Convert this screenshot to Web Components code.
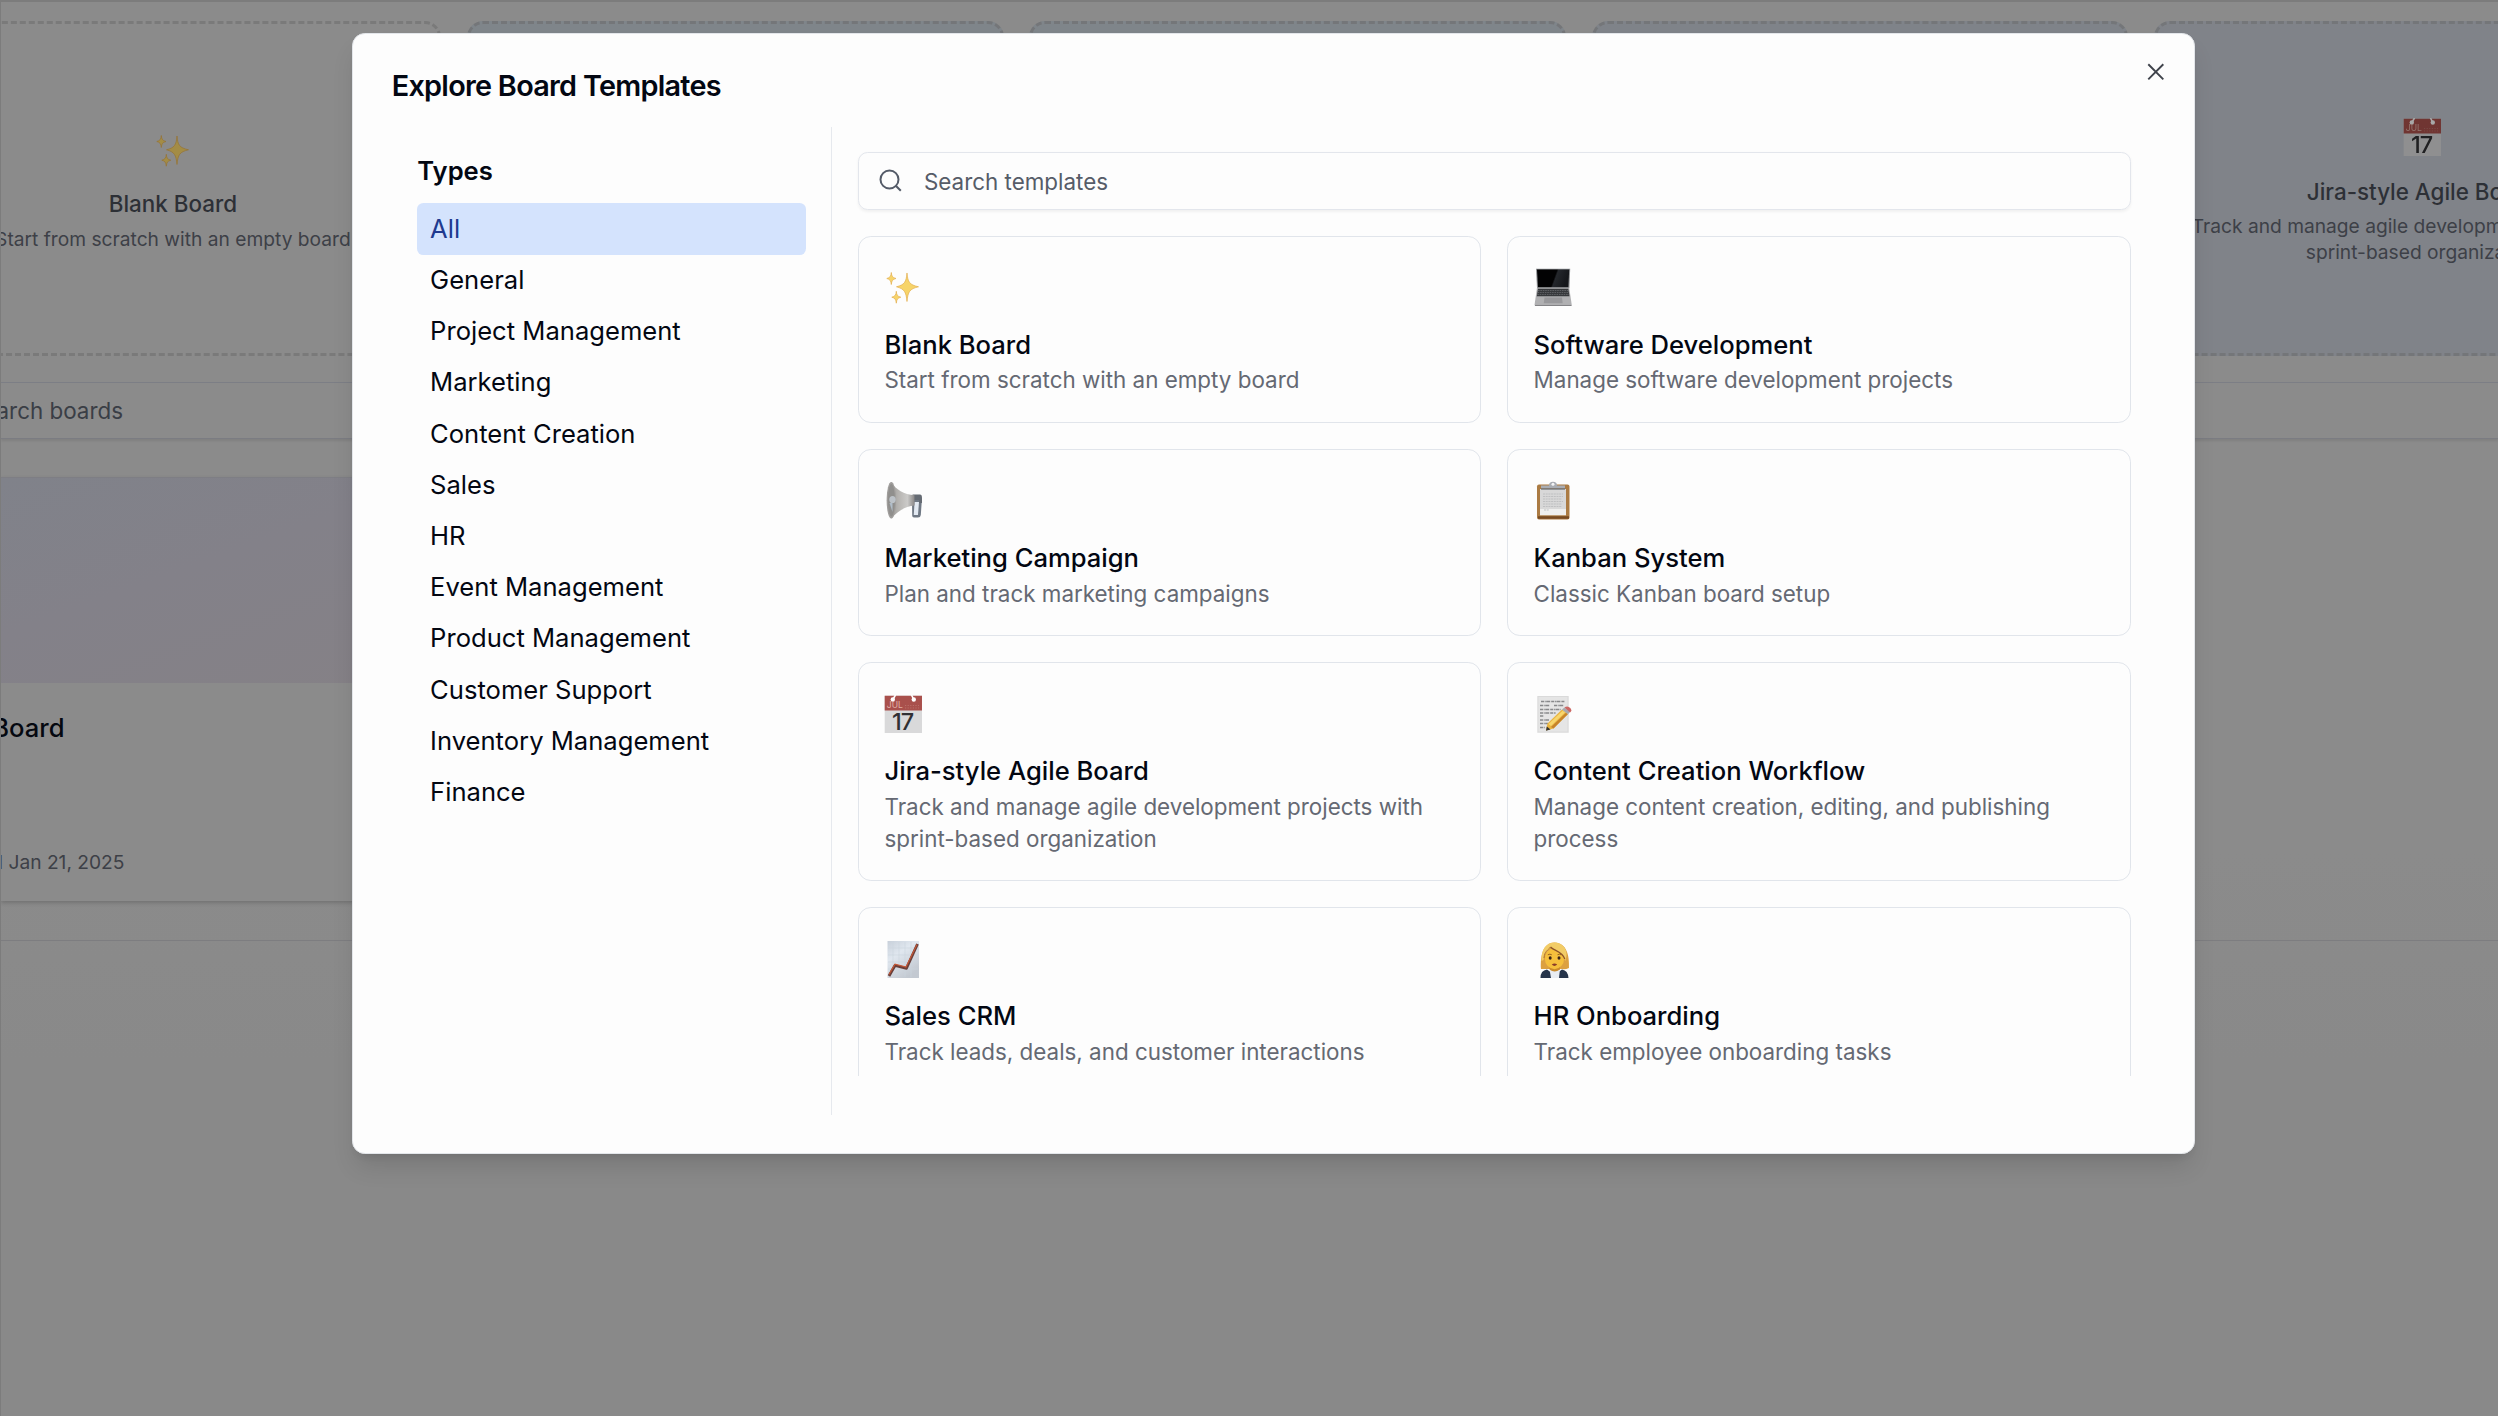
<!DOCTYPE html>
<html lang="en">
<head>
<meta charset="utf-8">
<title>Explore Board Templates</title>
<style>
html,body{margin:0;height:1416px;width:2498px;overflow:hidden;background:#8b8b8b}
body{font-family:Inter,"Liberation Sans",sans-serif;color:#030712;position:relative}
</style>
</head>
<body>
<boards-page></boards-page>
<template-dialog></template-dialog>
<script>
const define=(name,html,setup)=>customElements.define(name,class extends HTMLElement{
  constructor(){super();const t=document.createElement('template');t.innerHTML=html;this.attachShadow({mode:'open'}).append(t.content.cloneNode(true));}
  connectedCallback(){if(setup)setup(this,this.shadowRoot);}
});

const ICONS={
sparkles:`<g fill="#f7d469" stroke="#e3ae4c" stroke-width=".7" stroke-linejoin="round"><path d="M23 5C23.800 14.200 25.400 16.700 34.500 18.800C25.600 21 24 23.500 23 33.500C22 23.500 20.300 21 12.500 18.800C20.500 16.700 22.200 14.200 23 5Z"/><path d="M7.300 4.500C7.600 8.300 8.600 9.600 12 10.500C8.700 11.400 7.700 12.600 7.300 16.500C6.900 12.600 6 11.400 2.800 10.500C6 9.600 7 8.300 7.300 4.500Z"/><path d="M12.300 23.300C12.600 27.100 13.500 28.300 16.800 29.200C13.600 30.100 12.700 31.300 12.300 35.200C11.900 31.300 11 30.100 7.800 29.200C11 28.300 12 27.100 12.300 23.300Z"/></g>`,
laptop:`<defs><linearGradient id="a" x2="1" y2=".2"><stop offset=".6" stop-color="#020203"/><stop offset=".65" stop-color="#24272c"/><stop offset="1" stop-color="#15171b"/></linearGradient></defs><path d="M2 .8H36.200L35.400 20H3Z" fill="#8d8f92"/><path d="M3 1.600H35.200L34.400 19.300H4Z" fill="url(#a)"/><path d="M3 19.800H35.200L37.700 36.500Q37.800 38 36 38H2Q.4 38 .6 36.500Z" fill="#b0b0b2"/><path d="M4 20.800H34.300L35.500 28.300H2.800Z" fill="#37393c"/><path d="M4 22.500H34.500M3.700 24.500H34.800M3.300 26.500H35.200" stroke="#77797d" stroke-width=".6" stroke-dasharray="1.600 .8"/><path d="M10.500 29.500H28L28.700 35.300H9.700Z" fill="#98989b"/><path d="M1 37.500H37.500" stroke="#838386"/>`,
megaphone:`<defs><linearGradient id="a" x1="0" x2="1"><stop stop-color="#9a9997"/><stop offset=".3" stop-color="#b5b3b0"/><stop offset=".7" stop-color="#cbcac8"/><stop offset="1" stop-color="#8a8888"/></linearGradient></defs><path d="M28 18H36.600Q38 18 37.800 20L36.800 34Q36.600 36.500 34 36.500H30Q28 36.500 28.200 34Z" fill="#6f7884"/><path d="M30.500 21H35L34 34H29.800Z" fill="#e2e9f2"/><path d="M28.500 13.500H36Q38 13.500 38 17V22H35V19H28.500Z" fill="#656b73"/><path d="M7 1C12 8.500 20 13.600 30.500 14.200V24.500C21 25.500 13 30.500 7.500 37.500Z" fill="url(#a)"/><ellipse cx="7.300" cy="19.300" rx="4.700" ry="18.300" fill="#a09e9c"/><ellipse cx="7.400" cy="19.300" rx="3.500" ry="16.200" fill="#908f8d"/><ellipse cx="8.500" cy="18.500" rx="3.200" ry="3.600" fill="#bcc2c8"/><path d="M5.500 22L8.500 22V31Z" fill="#b0bdc9"/>`,
clipboard:`<rect x="3" y="3.500" width="32.500" height="35" rx="2" fill="#ab7b43"/><path d="M4 36.500H35" stroke="#764a22" stroke-width="2.500"/><path d="M6 8H32V33.500H6Z" fill="#d8d8d8"/><path d="M6 28H32V34.300H6Z" fill="#efefee"/><path d="M9 13H29M9 15.500H29M9 18H28M9 20.500H29M9 23H28M9 25.500H28M10 29H15" stroke="#bfc0c1" stroke-width="1" stroke-dasharray="2 .7"/><path d="M7 4.500H15Q15 .8 19 .8T23 4.500H31V7.500H7Z" fill="#a9adb4"/><circle cx="19" cy="3.300" r="1.500" fill="#f4f5f7"/><path d="M7 8H31" stroke="#666b71" stroke-width="1.200"/>`,
calendar:`<path d="M.7 .8H38V38H.7Z" fill="#d9d9da"/><path d="M.7 .8H38V15.500H.7Z" fill="#a9504c"/><circle cx="8.800" cy="4.500" r="2.200" fill="#fff"/><path d="M9.200 4L11.500 0" stroke="#fff" stroke-width="1.600"/><circle cx="29.800" cy="4.500" r="2.200" fill="#fff"/><path d="M29.500 4L27.500 0" stroke="#fff" stroke-width="1.600"/><path d="M21 10.500H35M21 13H35" stroke="#b96f68" stroke-width="1" stroke-dasharray="1.200 1.400"/><text x="2.800" y="13" font-size="8.500" fill="#e0b0a6" font-family="Inter,sans-serif">JUL</text><text x="18.500" y="35" text-anchor="middle" font-size="23.500" letter-spacing="-1" fill="#303033" font-family="Inter,sans-serif" font-weight="500">17</text>`,
memo:`<path d="M3.300 1H34.700V37.800H3.300Z" fill="#dadada"/><path d="M4.500 2H33.500V36.500H4.500Z" fill="#e5e5e5"/><path d="M7 6.500H31M6 10.500H16M20 10.500H30M6 14.500H27M6 18H22M6 21H10M6 25H15M6 28.500H14M6 32.500H11" stroke="#88898b" stroke-width="1.300" stroke-dasharray="3 .7 1 .5 4 1"/><path d="M12 35.500L13.500 28.500L28 14.500L34 19L19.500 33.500Z" fill="#e8b442"/><path d="M14.500 29L28.700 15.800L31 17.600L17 31Z" fill="#f8d66c"/><path d="M17 32L32 17.800L33.800 19.300L19.500 33.500Z" fill="#c7842a"/><path d="M12 35.700L12.800 31.500L16.500 34.500Z" fill="#343331"/><path d="M28 14.500L30.500 12.500L36 17L34 19.300Z" fill="#a8a9ad"/><path d="M30.500 12.500Q33.500 10.200 36.300 13Q38.500 15.500 36 17.500Z" fill="#cc6764"/>`,
chart:`<defs><linearGradient id="a" x2=".6" y2="1"><stop stop-color="#c8d0da"/><stop offset=".4" stop-color="#e0e7ef"/><stop offset="1" stop-color="#c3c9d1"/></linearGradient></defs><path d="M3.500 1H35V38H3.500Z" fill="url(#a)"/><path d="M9 2V37M15 2V37M21 2V37M27 2V37M4 8H34M4 15H34M4 22H34M4 29H34" stroke="#cbd5df" stroke-width=".6"/><path d="M5 36L11 25.500L22.500 28.300L33.500 4" fill="none" stroke="#693f3a" stroke-width="2.800" stroke-linejoin="round"/><path d="M5 34.500L11 24.200L22 27L33 4.500" fill="none" stroke="#c75836" stroke-width="1.100"/>`,
woman:`<path d="M7 29C6.500 17 8 3 20.500 2.500C33 3 35.500 16 35 28Q31 30 28 29H12Z" fill="#dca040"/><path d="M6.500 38Q6.500 30.500 13 29.500L20.500 35L28 29.500Q34 30.500 34.500 38Z" fill="#26344a"/><path d="M15.500 29H26L25 38H17Z" fill="#e9edf3"/><path d="M15.500 25H26V29.500Q20.500 33.500 15.500 29.500Z" fill="#c98a2c"/><ellipse cx="20.500" cy="18.700" rx="9.600" ry="10.500" fill="#f5bf3c"/><path d="M9.500 20C10 12 14.500 11 16.500 7.500C19 11.500 28.500 11 31.200 21C36 10 28 2.500 20.500 2.500C12 2.500 7 10 7.500 21Z" fill="#f2cc66"/><path d="M16.500 7C20 11 28 11 30.800 19" fill="none" stroke="#8d5226" stroke-width="1.300"/><path d="M16.500 7C14 10.500 10.500 11 10 18" fill="none" stroke="#a96b2a" stroke-width=".9"/><ellipse cx="16.200" cy="18" rx="1.500" ry="1.800" fill="#3b2418"/><ellipse cx="25" cy="18" rx="1.500" ry="1.800" fill="#3b2418"/><path d="M17.800 24.500Q20.500 22.500 23.200 24.500Q20.500 27.300 17.800 24.500" fill="#8b3c27"/><path d="M13.800 14.800Q16 13.600 17.800 14.800M23.500 14.800Q25.500 13.600 27 14.800" stroke="#8d591d" stroke-width=".9" fill="none"/>`
};
define('emoji-icon',`<style>:host{display:block;width:38.4px;height:38.4px}svg{display:block;width:100%;height:100%}</style><svg viewBox="0 0 38.400 38.400"></svg>`,
 (h,r)=>{r.querySelector('svg').innerHTML=ICONS[h.getAttribute('name')]||'';});

define('board-tile',`<style>
:host{display:flex;flex-direction:column;align-items:center;justify-content:center;box-sizing:border-box;height:334.4px;border:3.2px dashed #7a7a7a;border-radius:16px;background:var(--tile,#8b8b8b);min-width:0;text-align:center}
:host([tinted]){border-color:#747679}
emoji-icon{margin:6.4px 0 19.2px;filter:brightness(.66)}
.t{font-size:22.4px;line-height:32px;font-weight:500;color:#2d3036;white-space:nowrap}
.d{font-size:19.2px;line-height:25.6px;color:#3d4047;margin-top:6.4px;padding:0 25px}
</style><emoji-icon></emoji-icon><div class="t"><slot name="title"></slot></div><div class="d"><slot></slot></div>`,
 (h,r)=>{const n=h.getAttribute('icon'),e=r.querySelector('emoji-icon');if(!n){e.remove();return;}const f=document.createElement('emoji-icon');f.setAttribute('name',n);e.replaceWith(f);});

define('board-card',`<style>
:host{display:flex;flex-direction:column;box-sizing:border-box;width:410px;height:424px;border-top:1px solid #7e7e84;box-shadow:0 1.600px 4px rgba(0,0,0,.18);background:#8b8b8b;overflow:hidden}
.cover{height:205px;flex:none;background:linear-gradient(160deg,#80828a 0%,#838189 45%,#858186 100%)}
.body{display:flex;flex-direction:column;justify-content:space-between;box-sizing:border-box;width:124px;height:192px;padding-top:26px}
.t,.m{display:flex;justify-content:flex-end;white-space:nowrap}
.t{width:63.500px;font-size:25.600px;line-height:38.400px;font-weight:500;color:#050810}
.m{width:123.500px;font-size:19.200px;line-height:25.600px;color:#3d4047}
</style><div class="cover"></div><div class="body"><div class="t"><slot name="title"></slot></div><div class="m"><slot></slot></div></div>`);

define('boards-page',`<style>
:host{display:flex;flex-direction:column;box-sizing:border-box;width:2498px;height:1416px;overflow:hidden;background:linear-gradient(#8b8b8b 60%,#898989 75%);border-top:2px solid #7c7c7c;border-left:1px solid #7c7c7c}
.tiles{display:grid;grid-template-columns:repeat(5,536.800px);gap:25.600px;margin:19.300px 0 0 -96.500px}
.search{display:flex;align-items:center;box-sizing:border-box;height:57.600px;margin-top:26px;border-top:1.600px solid #7c7e85;border-bottom:1.600px solid #7b7c82;box-shadow:0 1.600px 2px rgba(0,0,0,.08);font-size:22.400px;color:#3a3e46}
.search span{width:122px;display:flex;justify-content:flex-end;white-space:nowrap}
.list{padding-top:38px;border-bottom:1.600px solid #7d7d80;box-sizing:border-box;height:502px}
</style>
<div class="tiles">
<board-tile icon="sparkles"><span slot="title">Blank Board</span>Start from scratch with an empty board</board-tile>
<board-tile tinted style="--tile:#7f858a"></board-tile>
<board-tile tinted style="--tile:#7f858a"></board-tile>
<board-tile tinted style="--tile:#7f8389"></board-tile>
<board-tile tinted icon="calendar" style="--tile:#808389"><span slot="title">Jira-style Agile Board</span>Track and manage agile development projects with sprint-based organization</board-tile>
</div>
<div class="search"><span>arch boards</span></div>
<div class="list"><board-card><span slot="title">Board</span>d Jan 21, 2025</board-card></div>`);

define('type-item',`<style>
:host{display:block;box-sizing:border-box;height:51.200px;padding:6.400px 12.800px;border-radius:6.400px;font-size:25.600px;line-height:38.400px;white-space:nowrap}
:host([selected]){background:#d4e3fd;color:#203a8f}
</style><slot></slot>`);

define('search-field',`<style>
:host{display:flex;align-items:center;flex:none;box-sizing:border-box;height:57.600px;border:1.600px solid #e3e6ec;border-radius:9.600px;padding-left:19px;gap:20.500px;font-size:22.400px;color:#565c68;box-shadow:0 1.600px 3px rgba(0,0,0,.05)}
svg{width:25.600px;height:25.600px;display:block}
</style><svg viewBox="0 0 25.600 25.600" fill="none" stroke="#545b68" stroke-width="2"><circle cx="11.500" cy="11.500" r="9"/><path d="M22.800 22.800L17.800 17.800"/></svg><slot></slot>`);

define('template-card',`<style>
:host{display:block;box-sizing:border-box;border:1.600px solid #e1e5eb;border-radius:12.800px;padding:31.500px 25.600px 25.600px;min-width:0}
.t{font-size:25.600px;line-height:38.400px;font-weight:500;margin-top:19.500px}
.d{font-size:22.400px;line-height:32px;color:#656973}
</style><emoji-icon></emoji-icon><div class="t"><slot name="title"></slot></div><div class="d"><slot></slot></div>`,
 (h,r)=>{const f=document.createElement('emoji-icon');f.setAttribute('name',h.getAttribute('icon'));r.querySelector('emoji-icon').replaceWith(f);});

define('template-dialog',`<style>
:host{position:absolute;left:352.300px;top:32.900px;display:flex;flex-direction:column;gap:25.600px;box-sizing:border-box;width:1843.200px;height:1121px;padding:38.400px;border:1.600px solid #e3e6ea;border-radius:12.800px;background:#fdfdfd;box-shadow:0 16px 24px -4.800px rgba(0,0,0,.12),0 6.400px 9.600px -6.400px rgba(0,0,0,.12)}
header{display:flex;justify-content:space-between;height:28.800px;flex:none}
h2{margin:0;font-size:28.800px;line-height:28.800px;font-weight:600;letter-spacing:-.72px;white-space:nowrap}
.close{width:25.600px;height:25.600px;margin:-12.800px -12.800px 0 0;display:block}
main{display:flex;flex:1;min-height:0}
nav{box-sizing:border-box;width:440.600px;flex:none;padding:25.600px;border-right:1.600px solid #e6e9ee}
h3{margin:0 0 12.800px;font-size:25.600px;line-height:38.400px;font-weight:600}
section{flex:1;min-width:0;padding:25.600px 25.600px 0;display:flex;flex-direction:column;gap:25.800px}
.grid{display:grid;grid-template-columns:1fr 1fr;grid-auto-rows:187.200px 187.200px 219px 187.200px;gap:26px 25.600px;height:840px;overflow:hidden}
</style>
<header><h2>Explore Board Templates</h2><svg class="close" viewBox="0 0 16 16"><path d="M3.300 3.300L12.700 12.700M12.700 3.300L3.300 12.700" stroke="#3f434b" stroke-width="1.200" fill="none"/></svg></header>
<main><nav><h3>Types</h3>
<type-item selected>All</type-item><type-item>General</type-item><type-item>Project Management</type-item><type-item>Marketing</type-item><type-item>Content Creation</type-item><type-item>Sales</type-item><type-item>HR</type-item><type-item>Event Management</type-item><type-item>Product Management</type-item><type-item>Customer Support</type-item><type-item>Inventory Management</type-item><type-item>Finance</type-item>
</nav><section><search-field>Search templates</search-field><div class="grid">
<template-card icon="sparkles"><span slot="title">Blank Board</span>Start from scratch with an empty board</template-card>
<template-card icon="laptop"><span slot="title">Software Development</span>Manage software development projects</template-card>
<template-card icon="megaphone"><span slot="title">Marketing Campaign</span>Plan and track marketing campaigns</template-card>
<template-card icon="clipboard"><span slot="title">Kanban System</span>Classic Kanban board setup</template-card>
<template-card icon="calendar"><span slot="title">Jira-style Agile Board</span>Track and manage agile development projects with sprint-based organization</template-card>
<template-card icon="memo"><span slot="title">Content Creation Workflow</span>Manage content creation, editing, and publishing process</template-card>
<template-card icon="chart"><span slot="title">Sales CRM</span>Track leads, deals, and customer interactions</template-card>
<template-card icon="woman"><span slot="title">HR Onboarding</span>Track employee onboarding tasks</template-card>
</div></section></main>`);
</script>
</body>
</html>
